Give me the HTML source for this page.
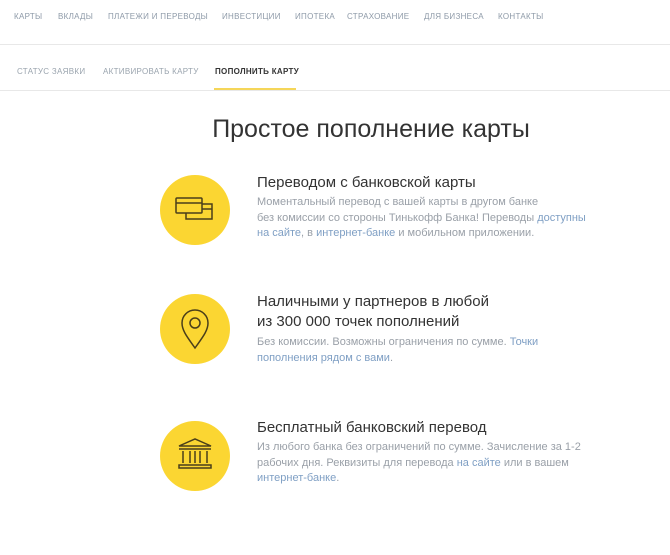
<!DOCTYPE html>
<html><head><meta charset="utf-8"><style>
body{margin:0;width:670px;height:555px;background:#fff;font-family:"Liberation Sans","Noto Sans CJK SC",sans-serif;position:relative;overflow:hidden}
.a{position:absolute;white-space:nowrap}
.n{font-size:8px;color:#8e9aa8;letter-spacing:.3px;top:12px}
.s{font-size:8px;color:#9aa4ae;letter-spacing:.3px;top:67px}
.c{position:absolute;left:160px;width:70px;height:70px;border-radius:50%;background:#fbd632}
.h{font-size:15px;color:#333;line-height:20px;left:257px}
.b{font-size:11px;color:#9aa0a8;line-height:15.5px;left:257px}
.l{color:#7f9fc4}
</style></head><body>
<div class="a n" style="left:14px">КАРТЫ</div>
<div class="a n" style="left:58px">ВКЛАДЫ</div>
<div class="a n" style="left:108px">ПЛАТЕЖИ И ПЕРЕВОДЫ</div>
<div class="a n" style="left:222px">ИНВЕСТИЦИИ</div>
<div class="a n" style="left:295px">ИПОТЕКА</div>
<div class="a n" style="left:347px">СТРАХОВАНИЕ</div>
<div class="a n" style="left:424px">ДЛЯ БИЗНЕСА</div>
<div class="a n" style="left:498px">КОНТАКТЫ</div>
<div class="a" style="left:0;top:44px;width:670px;height:1px;background:#e8e8e8"></div>
<div class="a s" style="left:17px">СТАТУС ЗАЯВКИ</div>
<div class="a s" style="left:103px">АКТИВИРОВАТЬ КАРТУ</div>
<div class="a s" style="left:215px;color:#333;font-weight:bold">ПОПОЛНИТЬ КАРТУ</div>
<div class="a" style="left:0;top:90px;width:670px;height:1px;background:#e8e8e8"></div>
<div class="a" style="left:214px;top:88px;width:82px;height:2px;background:#f5d659"></div>
<div class="a" style="left:0;width:742px;text-align:center;top:115px;font-size:25px;color:#333">Простое пополнение карты</div>

<div class="c" style="top:175px"><svg width="70" height="70" viewBox="0 0 70 70" fill="none" stroke="#4a3f1a" stroke-width="1.5"><rect x="16" y="23" width="26" height="15" rx="1"/><line x1="16" y1="28" x2="42" y2="28"/><path d="M42 29h10v15H26v-6"/><line x1="42" y1="34" x2="52" y2="34"/></svg></div>
<div class="a h" style="top:173px">Переводом с банковской карты</div>
<div class="a b" style="top:195px">Моментальный перевод с вашей карты в другом банке<br>без комиссии со стороны Тинькофф Банка! Переводы <span class="l">доступны</span><br><span class="l">на сайте</span>, в <span class="l">интернет-банке</span> и мобильном приложении.</div>

<div class="c" style="top:294px"><svg width="70" height="70" viewBox="0 0 70 70" fill="none" stroke="#4a3f1a" stroke-width="1.5"><path d="M35 54C28 44 22 37 22 29a13 13 0 0 1 26 0c0 8-6 15-13 25z"/><circle cx="35" cy="29" r="5"/></svg></div>
<div class="a h" style="top:292px">Наличными у партнеров в любой<br>из 300 000 точек пополнений</div>
<div class="a b" style="top:335px">Без комиссии. Возможны ограничения по сумме. <span class="l">Точки</span><br><span class="l">пополнения рядом с вами</span>.</div>

<div class="c" style="top:421px"><svg width="70" height="70" viewBox="0 0 70 70" fill="none" stroke="#4a3f1a" stroke-width="1.5"><path d="M19 25l16-7 16 7z"/><line x1="19" y1="28" x2="51" y2="28"/><line x1="23" y1="30" x2="23" y2="42"/><line x1="30" y1="30" x2="30" y2="42"/><line x1="35" y1="30" x2="35" y2="42"/><line x1="40" y1="30" x2="40" y2="42"/><line x1="47" y1="30" x2="47" y2="42"/><rect x="19" y="44" width="32" height="3"/></svg></div>
<div class="a h" style="top:418px">Бесплатный банковский перевод</div>
<div class="a b" style="top:440px">Из любого банка без ограничений по сумме. Зачисление за 1-2<br>рабочих дня. Реквизиты для перевода <span class="l">на сайте</span> или в вашем<br><span class="l">интернет-банке</span>.</div>
</body></html>
